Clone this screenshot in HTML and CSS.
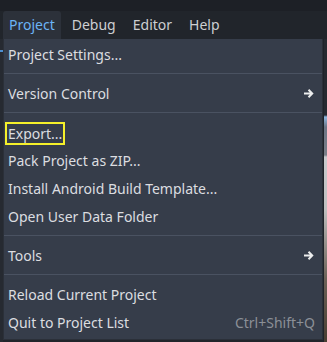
FILE: index.html
```html
<!DOCTYPE html>
<html lang="en">
<head>
  <meta charset="UTF-8">
  <title>Project Menu</title>
  <link rel="stylesheet" href="styles.css">
</head>
<body>

  <div class="menubar">
    <span class="menu-btn active">Project</span>
    <span class="menu-btn">Debug</span>
    <span class="menu-btn">Editor</span>
    <span class="menu-btn">Help</span>
  </div>

  <div class="stage">
    <div class="edge-left"><i class="tick"></i></div>

    <ul class="popup">
      <li class="item">Project Settings...</li>
      <li class="sep"></li>
      <li class="item">Version Control
        <svg class="arrow" width="11" height="11" viewBox="0 0 11 11"><path d="M1 5.5h8M5.5 1.8L9.2 5.5L5.5 9.2" fill="none" stroke="#eceded" stroke-width="2"/></svg>
      </li>
      <li class="sep"></li>
      <li class="item"><span class="focus">Export...</span></li>
      <li class="item">Pack Project as ZIP...</li>
      <li class="item">Install Android Build Template...</li>
      <li class="item">Open User Data Folder</li>
      <li class="sep"></li>
      <li class="item">Tools
        <svg class="arrow" width="11" height="11" viewBox="0 0 11 11"><path d="M1 5.5h8M5.5 1.8L9.2 5.5L5.5 9.2" fill="none" stroke="#eceded" stroke-width="2"/></svg>
      </li>
      <li class="sep"></li>
      <li class="item">Reload Current Project</li>
      <li class="item">Quit to Project List <span class="shortcut">Ctrl+Shift+Q</span></li>
    </ul>

    <div class="edge-right"></div>
  </div>

</body>
</html>
```

FILE: styles.css
```css
body {
  margin: 0;
  width: 327px;
  height: 342px;
  overflow: hidden;
  background: #21252b;
  font-family: "Noto Sans", sans-serif;
  font-size: 14px;
  color: #dcdde0;
}

.menubar {
  display: flex;
  height: 28px;
  padding: 11px 0 0 3px;
  background: linear-gradient(#1d2026 0, #1d2026 11px, #21252b 11px);
}

.menu-btn {
  display: flex;
  align-items: center;
  padding: 0 6px 2px;
  margin-right: 5px;
  color: #cdcfd2;
  border-radius: 3px 3px 0 0;
}

.menu-btn.active {
  color: #6cb4f5;
  background: #2c313a;
}

.stage {
  display: flex;
  height: 303px;
}

.edge-left {
  width: 3px;
  background: #262a31;
}

.tick {
  display: block;
  width: 3px;
  height: 2px;
  margin-top: 11px;
  background: #4d8fd0;
}

.popup {
  list-style: none;
  margin: 0;
  padding: 1px 0 3px;
  width: 318px;
  height: 296px;
  background: #363d4a;
  border: 1px solid #2b3039;
  border-top: none;
}

.item {
  display: flex;
  align-items: center;
  justify-content: space-between;
  height: 28px;
  padding: 0 7px 0 4px;
}

.sep {
  height: 11px;
  display: flex;
  align-items: center;
}

.sep::before {
  content: "";
  flex: 1;
  height: 1px;
  background: #4a5261;
}

.focus {
  padding: 0 1px;
  margin: 2px 0 0 -1px;
  line-height: 19px;
  outline: 2px solid #f5f02a;
}

.arrow {
  margin-right: 1px;
}

.shortcut {
  color: #8c9097;
}

.edge-right {
  flex: 1;
  border-left: 1px solid #1f232a;
  background: linear-gradient(#262a31 0, #262a31 76px, #8fb8e0 78px, #6c7585 88px, #7a7f88 116px, #c9cbce 118px, #bfc0c0 170px, #6b6157 240px, #4a3f33 300px);
}
```
